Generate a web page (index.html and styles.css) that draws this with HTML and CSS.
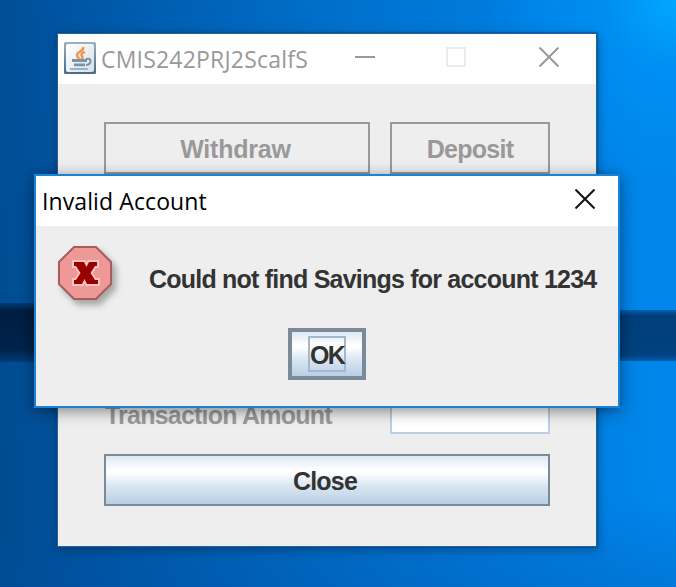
FILE: index.html
```html
<!DOCTYPE html>
<html lang="en">
<head>
<meta charset="utf-8">
<title>CMIS242PRJ2ScalfS</title>
<link rel="stylesheet" href="styles.css">
</head>
<body>
<main class="desktop">
  <section class="window app">
    <header class="titlebar">
      <svg class="java" viewBox="0 0 32 32" width="32" height="32">
        <defs>
          <linearGradient id="frame" x1="0" y1="0" x2="0" y2="1"><stop offset="0" stop-color="#9db0bd"/><stop offset="1" stop-color="#456a84"/></linearGradient>
          <linearGradient id="face" x1="0" y1="0" x2="1" y2="1"><stop offset="0" stop-color="#fff"/><stop offset="1" stop-color="#d9e0e7"/></linearGradient>
        </defs>
        <rect width="32" height="32" rx="1.5" fill="url(#frame)"/>
        <rect x="2" y="2" width="28" height="28" rx="2" fill="url(#face)"/>
        <path d="M19 5c2 4-6 4-6 8 0 2 2 3 2 4M21 10c-4 1-4 3-3 4s1 2-1 4" fill="none" stroke="#f0944a" stroke-width="2.4"/>
        <path d="M8 18.500h15M10 22.800h11" fill="none" stroke="#7893a8" stroke-width="2.800"/>
        <path d="M22 17c6-2 6 5 0 6" fill="none" stroke="#7893a8" stroke-width="2"/>
        <path d="M6 27h18" stroke="#9db1c0" stroke-width="2"/>
      </svg>
      <h1 class="title app-title">CMIS242PRJ2ScalfS</h1>
      <svg class="controls" width="206" height="20" viewBox="0 0 206 20" fill="none" stroke-width="2">
        <path d="M0 10h20" stroke="#999"/>
        <rect x="92" y="1" width="18" height="18" stroke="#ebebeb"/>
        <path d="M184.5.5l19 19M203.500.5l-19 19" stroke="#999"/>
      </svg>
    </header>
    <div class="form">
      <div class="row">
        <button class="button withdraw" disabled><span>Withdraw</span></button>
        <button class="button deposit" disabled><span>Deposit</span></button>
      </div>
      <div class="row amount">
        <label class="label" for="amount">Transaction Amount</label>
        <input class="field" id="amount">
      </div>
      <button class="button close"><span>Close</span></button>
    </div>
  </section>
  <section class="window dialog">
    <header class="titlebar">
      <h2 class="title dialog-title">Invalid Account</h2>
      <svg class="dialog-x" width="20" height="20" viewBox="0 0 20 20"><path d="M.5.5l19 19M19.500.5l-19 19" stroke="#111" stroke-width="2"/></svg>
    </header>
    <div class="message">
      <svg class="error" width="66" height="66" viewBox="0 0 66 66">
        <path class="octagon" d="M16 1h22l15 15v22l-15 15H16L1 38V16z" fill="#ef9898" stroke="#a55d5d" stroke-width="2"/>
        <path d="M16 16h10l2.500 5L31 16h8v4h-2l-4.500 7 4.500 7h3v4H29l-2.500-5-2.500 5h-8v-4h2l4.500-7-4.500-7h-2z" fill="#900" stroke="#ffc3c3" stroke-width="4" paint-order="stroke"/>
      </svg>
      <p class="text">Could not find Savings for account 1234</p>
    </div>
    <button class="button ok"><span class="focus">OK</span></button>
  </section>
</main>
</body>
</html>
```
FILE: styles.css
```css
* { box-sizing: border-box; }
body { margin: 0; }
.desktop {
  position: relative;
  width: 676px;
  height: 587px;
  overflow: hidden;
  background:
    linear-gradient(#003c78, #001c3e 8px, #00234b 46px, #003c78) 0 303px / 36px 59px no-repeat,
    linear-gradient(#005eaf, #003e78 6px, #00427f 45px, #005eaf) 618px 310px / 58px 51px no-repeat,
    radial-gradient(circle at 676px 0, #00a8ff, rgba(0, 148, 248, .6) 70px, transparent 190px),
    linear-gradient(transparent 500px, rgba(0, 80, 170, .25)),
    linear-gradient(86deg, #004b8d 0, #0053a0 90px, #005fb2 210px, #0070cc 380px, #0080e3 590px, #0086ea 676px);
}
.window { position: absolute; background: #eee; }
.app {
  left: 57px;
  top: 33px;
  width: 540px;
  height: 514px;
  border: 1px solid #1b65a5;
  box-shadow: 0 0 1px 1px rgba(20, 70, 120, .55), 1px 3px 10px rgba(0, 0, 0, .3);
}
.dialog {
  left: 34px;
  top: 174px;
  width: 586px;
  height: 234px;
  border: 2px solid #1883d7;
  box-shadow: 0 3px 14px rgba(0, 0, 0, .45);
}
.titlebar { display: flex; align-items: flex-start; height: 50px; background: #fff; }
.title {
  margin: 0;
  font: 400 23px/32px "Open Sans", "Noto Sans", sans-serif;
  white-space: nowrap;
}
.java { flex: none; margin: 8px 0 0 6px; }
.app-title { width: 254px; margin: 9px 0 0 5px; color: #999; letter-spacing: .2px; }
.controls { flex: none; margin-top: 13px; }
.dialog-title { flex: 1; margin: 9px 0 0 6px; color: #000; letter-spacing: .1px; }
.dialog-x { margin: 13px 23px 0 0; }
.form { display: flex; flex-direction: column; padding: 38px 46px; }
.row { display: flex; gap: 20px; }
.button, .label, .text {
  font: 700 25px/28px "Liberation Sans", Arial, sans-serif;
  letter-spacing: -.78px;
  color: #333;
  white-space: nowrap;
}
.button {
  height: 52px;
  padding: 2px 0 0;
  border: 2px solid #7a8a99;
  background: linear-gradient(#dde8f3, #fff 30%, #fff 34%, #dde8f3 60%, #b8cfe5);
}
.button:disabled { border-color: #999; background: #eee; color: #999; }
.button span { display: block; }
.withdraw { width: 266px; padding-right: 3px; letter-spacing: -.2px; }
.deposit { width: 160px; letter-spacing: -.75px; }
.amount { margin: 208px 0 20px; align-items: flex-end; }
.label { width: 266px; padding: 0 0 5px 1px; color: #999; }
.field { width: 160px; height: 52px; border: 2px solid #b8cfe5; background: #fff; }
.close { width: 446px; padding-right: 4px; }
.message { display: flex; height: 102px; padding: 20px 0 0 22px; }
.error { flex: none; overflow: visible; }
.octagon { filter: drop-shadow(4px 5px 3px rgba(0, 0, 0, .3)); }
.text { margin: 19px 0 0 25px; }
.ok { display: flex; justify-content: center; width: 78px; margin-left: 252px; padding: 0; border-width: 4px; letter-spacing: -1.8px; }
.focus { width: 38px; height: 36px; margin-top: 4px; border: 2px solid #a3b8cc; line-height: 34px; }
```
